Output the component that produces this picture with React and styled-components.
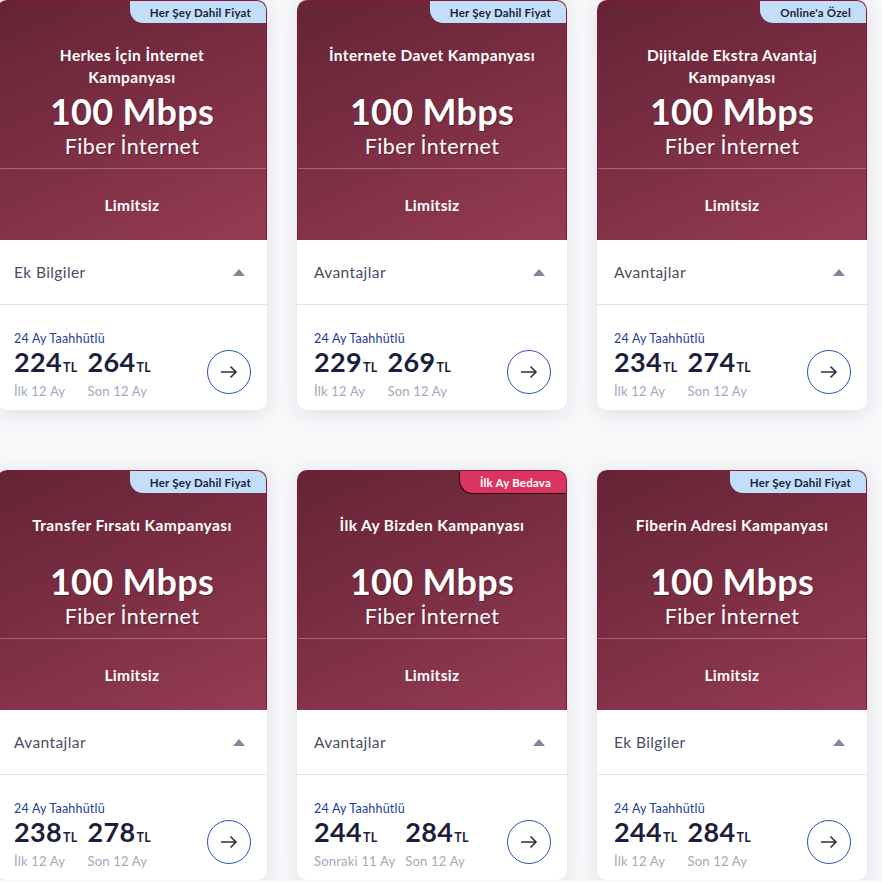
import styled, { createGlobalStyle } from 'styled-components'

const GlobalStyle = createGlobalStyle`
  body {
    margin: 0;
    background: #f7f8fa;
    font-family: Lato, "Noto Sans", sans-serif;
    overflow: hidden;
  }
`;

const Grid = styled.div`
  display: grid;
  grid-template-columns: repeat(3, 270px);
  column-gap: 30px;
  row-gap: 60px;
  margin-left: -3px;
`;

const Card = styled.div`
  background: #fff;
  border-radius: 10px;
  box-shadow: 0 3px 18px rgba(40, 50, 80, 0.12);
  display: flex;
  flex-direction: column;
  height: 410px;
`;

const Header = styled.div`
  position: relative;
  height: 240px;
  box-sizing: border-box;
  border: 1px solid #861a35;
  border-bottom: none;
  border-radius: 10px 10px 0 0;
  background: linear-gradient(155deg, #642435 0%, #7a2d42 45%, #953c54 100%);
  color: #fff;
  display: flex;
  flex-direction: column;
  overflow: hidden;
`;

const Badge = styled.div`
  position: absolute;
  top: 0;
  right: 0;
  height: 22px;
  padding: 0 15px 0 20px;
  display: flex;
  align-items: center;
  font-size: 11.5px;
  font-weight: 700;
  letter-spacing: 0.2px;
  border-bottom-left-radius: 13px;
  background: ${p => (p.pink ? '#dc3461' : '#c3def8')};
  color: ${p => (p.pink ? '#fff' : '#1c1f3a')};
  box-shadow: ${p => (p.pink ? '-1px 1px 0 #2a0a14' : 'none')};
`;

const Top = styled.div`
  height: 168px;
  border-bottom: 1px solid rgba(255, 255, 255, 0.28);
  display: flex;
  flex-direction: column;
  align-items: center;
  padding-top: 43px;
  box-sizing: border-box;
`;

const Title = styled.div`
  height: 46px;
  width: 215px;
  text-align: center;
  font-size: 15.5px;
  font-weight: 700;
  letter-spacing: 0.4px;
  line-height: 22px;
`;

const Speed = styled.div`
  font-size: 36px;
  font-weight: 700;
  line-height: 42px;
  letter-spacing: 0.3px;
  text-shadow: 1px 1px 0 rgba(40, 10, 20, 0.45);
`;

const Kind = styled.div`
  font-size: 21.5px;
  line-height: 28px;
  letter-spacing: 0.4px;
  text-shadow: 1px 1px 0 rgba(40, 10, 20, 0.35);
`;

const Limit = styled.div`
  flex: 1;
  display: flex;
  align-items: center;
  justify-content: center;
  font-size: 15.5px;
  font-weight: 700;
  letter-spacing: 0.3px;
  padding-top: 1px;
`;

const InfoRow = styled.div`
  height: 64px;
  border-bottom: 1px solid #dfe4ed;
  display: flex;
  align-items: center;
  justify-content: space-between;
  padding: 0 22px 0 17px;
  font-size: 15.5px;
  letter-spacing: 0.4px;
  color: #4b4d5e;
`;

const Caret = styled.div`
  width: 0;
  height: 0;
  border-left: 6px solid transparent;
  border-right: 6px solid transparent;
  border-bottom: 7px solid #7e879b;
`;

const PriceArea = styled.div`
  flex: 1;
  display: flex;
  align-items: flex-start;
  justify-content: space-between;
  padding: 26px 16px 0 17px;
`;

const Commit = styled.div`
  font-size: 12.5px;
  line-height: 16px;
  letter-spacing: 0.2px;
  color: #1d3b9c;
`;

const Prices = styled.div`
  display: flex;
  gap: 10px;
`;

const PriceCol = styled.div`
  display: flex;
  flex-direction: column;
`;

const Amount = styled.div`
  font-size: 27px;
  font-weight: 700;
  color: #1b1f3b;
  line-height: 30px;
  letter-spacing: 0.3px;
  span {
    font-size: 12.5px;
    margin-left: 1px;
  }
`;

const Period = styled.div`
  font-size: 13px;
  color: #a3a9ba;
  line-height: 16px;
  letter-spacing: 0.2px;
`;

const Go = styled.div`
  width: 42px;
  height: 42px;
  border: 1px solid #2a55b3;
  border-radius: 50%;
  display: flex;
  align-items: center;
  justify-content: center;
  margin-top: 19px;
`;

const Arrow = () => (
  <svg width="18" height="14" viewBox="0 0 18 14">
    <path d="M1 7h15M10.5 1.5L16 7l-5.5 5.5" fill="none" stroke="#2f3040" strokeWidth="1.6" />
  </svg>
);

const plans = [
  { badge: 'Her Şey Dahil Fiyat', title: 'Herkes İçin İnternet Kampanyası', info: 'Ek Bilgiler', first: '224', last: '264', l1: 'İlk 12 Ay' },
  { badge: 'Her Şey Dahil Fiyat', title: 'İnternete Davet Kampanyası', info: 'Avantajlar', first: '229', last: '269', l1: 'İlk 12 Ay' },
  { badge: "Online'a Özel", title: 'Dijitalde Ekstra Avantaj Kampanyası', info: 'Avantajlar', first: '234', last: '274', l1: 'İlk 12 Ay' },
  { badge: 'Her Şey Dahil Fiyat', title: 'Transfer Fırsatı Kampanyası', info: 'Avantajlar', first: '238', last: '278', l1: 'İlk 12 Ay' },
  { badge: 'İlk Ay Bedava', pink: true, title: 'İlk Ay Bizden Kampanyası', info: 'Avantajlar', first: '244', last: '284', l1: 'Sonraki 11 Ay' },
  { badge: 'Her Şey Dahil Fiyat', title: 'Fiberin Adresi Kampanyası', info: 'Ek Bilgiler', first: '244', last: '284', l1: 'İlk 12 Ay' },
];

export default function App() {
  return (
    <>
      <GlobalStyle />
      <Grid>
        {plans.map((p, i) => (
          <Card key={i}>
            <Header>
              <Badge pink={p.pink}>{p.badge}</Badge>
              <Top>
                <Title>{p.title}</Title>
                <Speed>100 Mbps</Speed>
                <Kind>Fiber İnternet</Kind>
              </Top>
              <Limit>Limitsiz</Limit>
            </Header>
            <InfoRow>
              {p.info}
              <Caret />
            </InfoRow>
            <PriceArea>
              <div>
                <Commit>24 Ay Taahhütlü</Commit>
                <Prices>
                  <PriceCol>
                    <Amount>{p.first}<span>TL</span></Amount>
                    <Period>{p.l1}</Period>
                  </PriceCol>
                  <PriceCol>
                    <Amount>{p.last}<span>TL</span></Amount>
                    <Period>Son 12 Ay</Period>
                  </PriceCol>
                </Prices>
              </div>
              <Go><Arrow /></Go>
            </PriceArea>
          </Card>
        ))}
      </Grid>
    </>
  )
}
